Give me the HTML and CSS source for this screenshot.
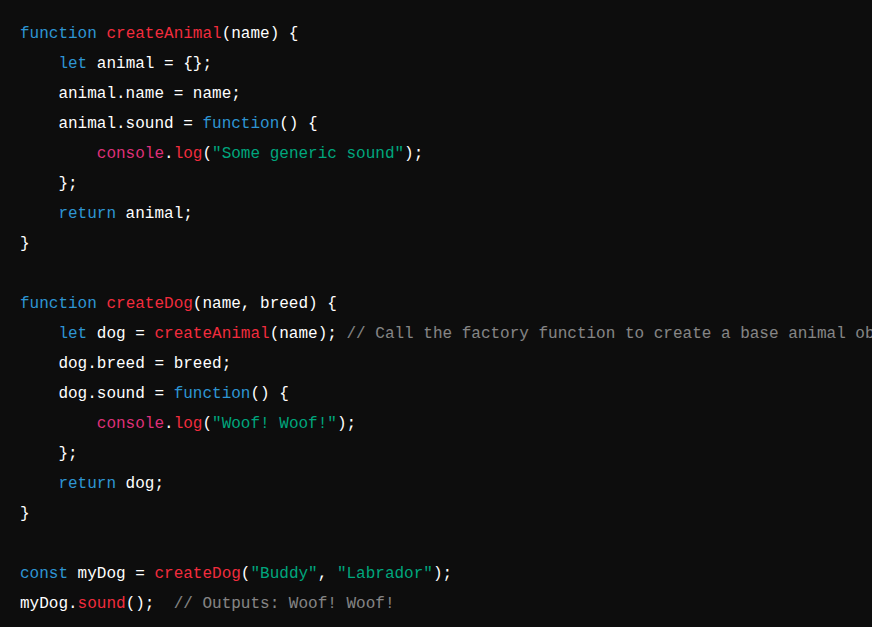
FILE: index.html
```html
<!DOCTYPE html>
<html>
<head>
<meta charset="utf-8">
<link rel="stylesheet" href="styles.css">
</head>
<body>
<pre class="code"><code class="src"><span class="kw">function</span> <span class="fn">createAnimal</span>(name) {
    <span class="kw">let</span> animal = {};
    animal.name = name;
    animal.sound = <span class="kw">function</span>() {
        <span class="var">console</span>.<span class="fn">log</span>(<span class="str">"Some generic sound"</span>);
    };
    <span class="kw">return</span> animal;
}

<span class="kw">function</span> <span class="fn">createDog</span>(name, breed) {
    <span class="kw">let</span> dog = <span class="fn">createAnimal</span>(name); <span class="cm">// Call the factory function to create a base animal object</span>
    dog.breed = breed;
    dog.sound = <span class="kw">function</span>() {
        <span class="var">console</span>.<span class="fn">log</span>(<span class="str">"Woof! Woof!"</span>);
    };
    <span class="kw">return</span> dog;
}

<span class="kw">const</span> myDog = <span class="fn">createDog</span>(<span class="str">"Buddy"</span>, <span class="str">"Labrador"</span>);
myDog.<span class="fn">sound</span>();  <span class="cm">// Outputs: Woof! Woof!</span></code></pre>
</body>
</html>
```
FILE: styles.css
```css
html, body {
  margin: 0;
  padding: 0;
  background: #0d0d0d;
  overflow: hidden;
}
.code {
  margin: 0;
  padding: 19px 0 0 20px;
  font-family: "Liberation Mono", monospace;
  font-size: 16px;
  line-height: 30px;
  color: #ffffff;
  white-space: pre;
  overflow: hidden;
}
.src {
  font: inherit;
  line-height: inherit;
}
.kw { color: #2e95d3; }
.fn { color: #f22c3d; }
.var { color: #df3079; }
.str { color: #00a67d; }
.cm { color: rgba(255, 255, 255, 0.5); }
```
